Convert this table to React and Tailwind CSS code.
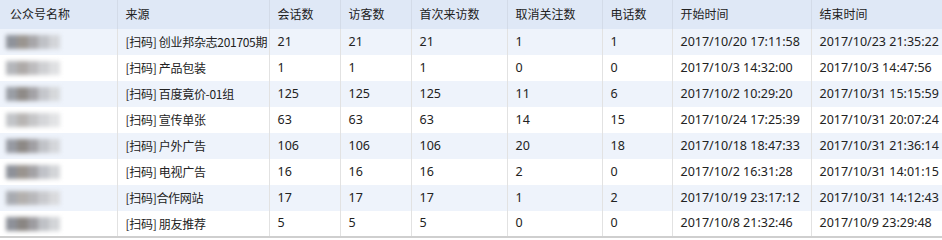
import React from 'react';

const columns = [
    { title: '公众号名称', width: 117 },
    { title: '来源', width: 152 },
    { title: '会话数', width: 71 },
    { title: '访客数', width: 71 },
    { title: '首次来访数', width: 96 },
    { title: '取消关注数', width: 95 },
    { title: '电话数', width: 70 },
    { title: '开始时间', width: 139 },
    { title: '结束时间', width: 131 },
];

const rows = [
    { blob: ['#8f939b', '#9a9590', '#a7a6a9', '#bfc1c6', '#d3d5d9'], source: '[扫码] 创业邦杂志201705期', nums: [21, 21, 21, 1, 1], start: '2017/10/20 17:11:58', end: '2017/10/23 21:35:22' },
    { blob: ['#b4b6ba', '#aeaaa8', '#bdbcbe', '#cfd0d3', '#dfe0e2'], source: '[扫码] 产品包装', nums: [1, 1, 1, 0, 0], start: '2017/10/3 14:32:00', end: '2017/10/3 14:47:56' },
    { blob: ['#9a9ea5', '#8f8b88', '#a3a2a6', '#c4c6cb', '#d6d8db'], source: '[扫码] 百度竟价-01组', nums: [125, 125, 125, 11, 6], start: '2017/10/2 10:29:20', end: '2017/10/31 15:15:59' },
    { blob: ['#c2c4c8', '#b8b5b3', '#c6c6c8', '#d5d6d9', '#e2e3e5'], source: '[扫码] 宣传单张', nums: [63, 63, 63, 14, 15], start: '2017/10/24 17:25:39', end: '2017/10/31 20:07:24' },
    { blob: ['#979aa2', '#8d8986', '#a09fa3', '#c0c2c7', '#d4d6da'], source: '[扫码] 户外广告', nums: [106, 106, 106, 20, 18], start: '2017/10/18 18:47:33', end: '2017/10/31 21:36:14' },
    { blob: ['#8e9199', '#9a948f', '#a3a2a5', '#c0c2c8', '#d3d5d8'], source: '[扫码] 电视广告', nums: [16, 16, 16, 2, 0], start: '2017/10/2 16:31:28', end: '2017/10/31 14:01:15' },
    { blob: ['#a8abb1', '#b3b0ae', '#b8b8bb', '#c9cace', '#d9dadd'], source: '[扫码]合作网站', nums: [17, 17, 17, 1, 2], start: '2017/10/19 23:17:12', end: '2017/10/31 14:12:43' },
    { blob: ['#8e9199', '#8a8683', '#9d9ca0', '#bfc1c6', '#d3d5d8'], source: '[扫码] 朋友推荐', nums: [5, 5, 5, 0, 0], start: '2017/10/8 21:32:46', end: '2017/10/9 23:29:48' },
];

function Blur({ colors }) {
    return (
        <div className="-ml-[2px] flex h-[14px] w-[54px] blur-[2px]">
            {colors.map((c, i) => (
                <div key={i} className="h-full flex-1" style={{ backgroundColor: c }} />
            ))}
        </div>
    );
}

export default function App() {
    return (
        <div className="h-[240px] w-[942px] overflow-hidden bg-white font-['Noto_Sans','Noto_Sans_CJK_SC',sans-serif] text-[12.5px] text-[#222]">
            <table className="w-[942px] table-fixed border-collapse border-b-2 border-[#cfcfcf]">
                <colgroup>
                    {columns.map((col) => (
                        <col key={col.title} style={{ width: col.width }} />
                    ))}
                </colgroup>
                <thead>
                    <tr className="h-[29px] bg-[#dfe8f6]">
                        {columns.map((col, i) => (
                            <th
                                key={col.title}
                                className={`border-r border-[#d3dbe8] text-left text-[12px] font-normal last:border-r-0 ${i === 0 ? 'pl-[10px]' : 'pl-[8px]'}`}
                            >
                                {col.title}
                            </th>
                        ))}
                    </tr>
                </thead>
                <tbody>
                    {rows.map((row, r) => (
                        <tr key={r} className={`h-[26px] ${r % 2 === 0 ? 'bg-[#eef3fb]' : 'bg-white'}`}>
                            <td className="border-r border-[#e2e2e2] pl-[8px]">
                                <Blur colors={row.blob} />
                            </td>
                            <td className="whitespace-nowrap border-r border-[#e2e2e2] pl-[8px] font-['Noto_Sans_CJK_SC',sans-serif] text-[12px] tracking-[-0.3px]">{row.source}</td>
                            {row.nums.map((n, i) => (
                                <td key={i} className="border-r border-[#e2e2e2] pl-[8px]">{n}</td>
                            ))}
                            <td className="whitespace-nowrap border-r border-[#e2e2e2] pl-[8px]">{row.start}</td>
                            <td className="whitespace-nowrap pl-[8px]">{row.end}</td>
                        </tr>
                    ))}
                </tbody>
            </table>
        </div>
    );
}
